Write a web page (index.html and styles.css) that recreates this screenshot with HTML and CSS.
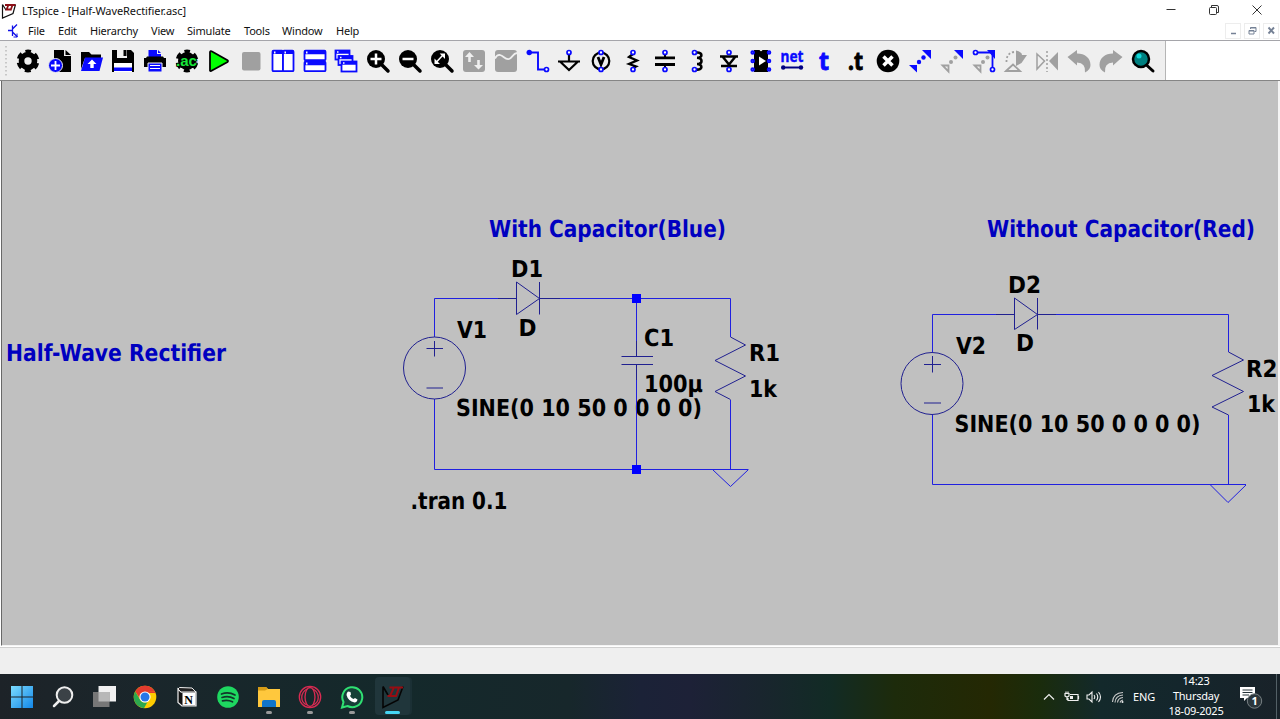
FILE: index.html
```html
<!DOCTYPE html>
<html lang="en">
<head>
<meta charset="utf-8">
<title>LTspice - [Half-WaveRectifier.asc]</title>
<link rel="stylesheet" href="styles.css">
</head>
<body>
<div class="app">
  <header class="titlebar">
    <svg class="logo" width="18" height="18" viewBox="0 0 18 18"><path d="M1.500 2.500V16L12 11.500L14.500 2.500M1.500 2.500L5 8" fill="none" stroke="#111" stroke-width="1.200"/><path d="M4 3H7.500L5.500 7.500H9.500M8 3H14.500M11.500 3L9.500 8.500" fill="none" stroke="#8c1018" stroke-width="1.800"/></svg>
    <span class="title">LTspice - [Half-WaveRectifier.asc]</span>
    <div class="winbtns">
      <svg width="12" height="12" viewBox="0 0 12 12"><path d="M1.500 5.500H10.500" stroke="#333"/></svg>
      <svg width="12" height="12" viewBox="0 0 12 12" fill="none" stroke="#333"><rect x="1.500" y="3.500" width="7" height="7" rx="1"/><path d="M3.500 3V1.500H9Q10.500 1.500 10.500 3V8.500H9"/></svg>
      <svg width="12" height="12" viewBox="0 0 12 12"><path d="M1.500 1.500L10.500 10.500M10.500 1.500L1.500 10.500" stroke="#333"/></svg>
    </div>
  </header>
  <nav class="menubar">
    <svg class="docicon" width="14" height="16" viewBox="0 0 14 16" fill="none" stroke="#1010e8" stroke-width="1.300"><path d="M1 7.500H5M5.500 2.500V13M5.500 6L10 1.500M5.500 9L10.500 14"/><path d="M10 10.500V14H6.500" stroke-width="1"/></svg>
    <span class="m1">File</span><span class="m2">Edit</span><span class="m3">Hierarchy</span><span class="m4">View</span><span class="m5">Simulate</span><span class="m6">Tools</span><span class="m7">Window</span><span class="m8">Help</span>
    <div class="mdi">
      <i><svg width="9" height="9" viewBox="0 0 9 9"><path d="M2 7.500H7" stroke="#758195" stroke-width="1.500"/></svg></i>
      <i><svg width="9" height="9" viewBox="0 0 9 9" fill="none" stroke="#758195"><path d="M2.500 3V1.500H8V5.500H6.500M2.500 2H8M1 4.500H6V8H1ZM1 5H6"/></svg></i>
      <i><svg width="9" height="9" viewBox="0 0 9 9"><path d="M1.500 1.500L7 7.500M7 1.500L1.500 7.500" stroke="#758195" stroke-width="1.900"/></svg></i>
    </div>
  </nav>
  <div class="toolrow">
    <div class="toolbar">
      <svg class="grip" width="4" height="32" viewBox="0 0 4 32"><path d="M2 1V32" stroke="#bbb" stroke-width="1.500" stroke-dasharray="1.500 2.500"/></svg>
      <!-- settings -->
      <svg viewBox="0 0 24 24"><circle cx="12" cy="12" r="6.500" fill="none" stroke="#000" stroke-width="5.600"/><circle cx="12" cy="12" r="9.600" fill="none" stroke="#000" stroke-width="3.600" stroke-dasharray="5.800 4.253" stroke-dashoffset="2.900" transform="rotate(-90 12 12)"/></svg>
      <!-- new -->
      <svg viewBox="0 0 24 24"><path d="M6 1H16V7H23V23H6Z"/><path d="M17.500 1L23 6H17.500Z"/><circle cx="7.500" cy="16.500" r="7" fill="#0a0aff" stroke="#efefef"/><path d="M7.500 12V21M3 16.500H12" stroke="#fff" stroke-width="1.800"/></svg>
      <!-- open -->
      <svg viewBox="0 0 24 24"><path d="M1 3H9L11.500 5.500H21V9H5L1 20Z"/><path d="M5 8.500H23L19.500 22H1Z" fill="#0a0aff"/><path d="M12 10.500L16.500 15H13.700V19H10.300V15H7.500Z" fill="#fff"/></svg>
      <!-- save -->
      <svg viewBox="0 0 24 24"><path d="M1 1H20L23 4V23H1Z"/><path d="M6 1H16V9H6Z" fill="#f0f0f0"/><path d="M12.500 1H15.500V7H12.500Z"/><path d="M3 14H21V23H3Z" fill="#fff"/><path d="M3 18.500H21V22H3Z" fill="#0a0aff"/></svg>
      <!-- print -->
      <svg viewBox="0 0 24 24"><path d="M5.500 1H14V5H18V9H5.500Z" fill="#0a0aff"/><path d="M15 1L18 4H15Z" fill="#0a0aff"/><path d="M1 9H3L4 7.500H20L21 9H23V18H1Z"/><path d="M5 14H19V23H5Z" fill="#0a0aff" stroke="#efefef"/><path d="M7 16.500H17M7 19.500H17" stroke="#fff" stroke-width="1.200"/></svg>
      <!-- analysis settings -->
      <svg viewBox="0 0 24 24"><circle cx="12" cy="12" r="9"/><circle cx="12" cy="12" r="9.600" fill="none" stroke="#000" stroke-width="3.600" stroke-dasharray="5.800 4.253" stroke-dashoffset="2.900" transform="rotate(-90 12 12)"/><text class="ac" x="1" y="16.500" textLength="21" lengthAdjust="spacingAndGlyphs">.ac</text></svg>
      <!-- run -->
      <svg viewBox="0 0 24 24"><path d="M3 3V21.500Q3.500 22.500 5 21.500L20.500 13Q21.500 12 20.500 11.300L5 2.500Q3.500 1.700 3 3Z" fill="#0f0" stroke="#000" stroke-width="1.800"/></svg>
      <!-- halt -->
      <svg viewBox="0 0 24 24"><rect x="3" y="3" width="18.500" height="18.500" rx="2" fill="#a0a0a0"/></svg>
      <!-- tile vertically -->
      <svg viewBox="0 0 24 24" fill="#fff" stroke="#0a0aff" stroke-width="1.800"><rect x="1.500" y="1.700" width="10.500" height="20.500" rx="1"/><rect x="12" y="1.700" width="10.500" height="20.500" rx="1"/><path d="M2 3.500H22" stroke-width="3"/><path d="M3 3.500H4.500M13.500 3.500H15" stroke="#fff"/></svg>
      <!-- tile horizontally -->
      <svg viewBox="0 0 24 24" fill="#fff" stroke="#0a0aff" stroke-width="1.800"><rect x="1.500" y="1.700" width="21" height="9.500" rx="1"/><rect x="1.500" y="12.700" width="21" height="9.500" rx="1"/><path d="M2 3.500H22M2 14.500H22" stroke-width="3.500"/><path d="M3 3.500H4.500M3 14.500H4.500" stroke="#fff"/></svg>
      <!-- cascade -->
      <svg viewBox="0 0 24 24" fill="#fff" stroke="#0a0aff" stroke-width="1.800"><rect x="1.500" y="1.500" width="14" height="9"/><path d="M2 3H15" stroke-width="3.500"/><rect x="4.500" y="7" width="14" height="9"/><path d="M5 8.500H18" stroke-width="3.500"/><rect x="7.500" y="12.500" width="15" height="10"/><path d="M8 14H22" stroke-width="3.500"/><path d="M3 3H4.500M6 8.500H7.500M9 14H10.500" stroke="#fff" stroke-width="1.300"/></svg>
      <!-- zoom in -->
      <svg viewBox="0 0 24 24"><circle cx="10" cy="10" r="9"/><path d="M15 15L22 22" stroke="#000" stroke-width="3.500" stroke-linecap="round"/><path d="M10 4.500V15.500M4.500 10H15.500" stroke="#fff" stroke-width="2.500"/></svg>
      <!-- zoom out -->
      <svg viewBox="0 0 24 24"><circle cx="10" cy="10" r="9"/><path d="M15 15L22 22" stroke="#000" stroke-width="3.500" stroke-linecap="round"/><path d="M4.500 10H15.500" stroke="#fff" stroke-width="2.500"/></svg>
      <!-- zoom fit -->
      <svg viewBox="0 0 24 24"><circle cx="10" cy="10" r="9"/><path d="M15 15L22 22" stroke="#000" stroke-width="3.500" stroke-linecap="round"/><path d="M6 13.500L13 6" stroke="#fff" stroke-width="1.500"/><path d="M9.700 4.500H15V10ZM4.500 9.500V15H10Z" fill="#fff"/></svg>
      <!-- autorange -->
      <svg viewBox="0 0 24 24"><rect x="1" y="1" width="22" height="22" rx="3" fill="#a0a0a0"/><path d="M7.500 3L12 8H8.800V13H6.200V8H3ZM16.500 20.500L12 16H15.200V11H17.800V16H21Z" fill="#efefef"/></svg>
      <!-- plot trace -->
      <svg viewBox="0 0 24 24"><rect x="1" y="1" width="22" height="22" rx="3" fill="#a0a0a0"/><path d="M1 9.500Q3 5.500 6 6C10 7 11 11 15 10C18 9 19 4.500 23 4" fill="none" stroke="#efefef" stroke-width="1.800"/></svg>
      <!-- wire -->
      <svg viewBox="0 0 24 24" fill="none" stroke="#0a0aff" stroke-width="1.900"><path d="M3 3.500H12V20.500H19"/><circle cx="3.200" cy="3.500" r="1.800" fill="#0a0aff"/><circle class="pin" cx="20.500" cy="20.500" r="2"/></svg>
      <!-- ground -->
      <svg viewBox="0 0 24 24" fill="none" stroke="#000" stroke-width="2.200"><path d="M12 5V12M1 12.500H23M3 12.500L12 21L21 12.500"/><circle class="pin" cx="12" cy="3.500" r="2"/></svg>
      <!-- voltage source -->
      <svg viewBox="0 0 24 24" fill="none" stroke="#000" stroke-width="2.200"><circle cx="12" cy="12" r="8.300"/><path d="M9 8L12 15.500L15 8" stroke-width="2.800"/><circle class="pin" cx="12" cy="3.500" r="2"/><circle class="pin" cx="12" cy="20.500" r="2"/></svg>
      <!-- resistor -->
      <svg viewBox="0 0 24 24" fill="none" stroke="#000" stroke-width="2.300"><path d="M12 5L8 8L16 11.500L8 15L15 17.500L12 19"/><circle class="pin" cx="12" cy="3.500" r="2"/><circle class="pin" cx="12" cy="20.500" r="2"/></svg>
      <!-- capacitor -->
      <svg viewBox="0 0 24 24" fill="none" stroke="#000" stroke-width="2.800"><path d="M2 8.800H22M2 15.500H22"/><path d="M12 5V8M12 16V19" stroke-width="2"/><circle class="pin" cx="12" cy="3.500" r="2"/><circle class="pin" cx="12" cy="20.500" r="2"/></svg>
      <!-- inductor -->
      <svg viewBox="0 0 24 24" fill="none" stroke="#000" stroke-width="2.600"><path d="M11 3.500C18 3 18 9 12 8.700C18 9 18 15 12 15C18 15 18 21.500 11 20.500"/><circle class="pin" cx="9.500" cy="3.500" r="2"/><circle class="pin" cx="9.500" cy="20.500" r="2"/></svg>
      <!-- diode -->
      <svg viewBox="0 0 24 24" fill="none" stroke="#000" stroke-width="2.400"><path d="M3 7.500H21M5.500 7.500L12 15.500L18.500 7.500M4 17H20"/><circle class="pin" cx="12" cy="3.500" r="2"/><circle class="pin" cx="12" cy="20.500" r="2"/></svg>
      <!-- component -->
      <svg viewBox="0 0 24 24"><path d="M5 1H10.500Q12 3.500 13.500 1H19V23H5Z"/><path d="M10 7.500L17 12L10 16.500Z" fill="#fff"/><g fill="#efefef" stroke="#0a0aff" stroke-width="2"><circle cx="3.700" cy="3.500" r="1.300"/><circle cx="3.700" cy="12" r="1.300"/><circle cx="3.700" cy="20.500" r="1.300"/><circle cx="20" cy="3.500" r="1.300"/><circle cx="20" cy="12" r="1.300"/><circle cx="20" cy="20.500" r="1.300"/></g></svg>
      <!-- net name -->
      <svg viewBox="0 0 24 24"><text class="net" x="0.500" y="13" textLength="23" lengthAdjust="spacingAndGlyphs">net</text><path d="M3 18.500H21" stroke="#000080" stroke-width="2"/><circle cx="3.200" cy="18.500" r="2.200" fill="#000080"/><circle cx="21" cy="18.500" r="2.200" fill="#000080"/></svg>
      <!-- text -->
      <svg viewBox="0 0 24 24"><text class="tee blue" x="7" y="21" textLength="10" lengthAdjust="spacingAndGlyphs">t</text></svg>
      <!-- directive -->
      <svg viewBox="0 0 24 24"><text class="tee" x="4" y="21" textLength="15" lengthAdjust="spacingAndGlyphs">.t</text></svg>
      <!-- delete -->
      <svg viewBox="0 0 24 24"><circle cx="12" cy="12" r="11.300"/><path d="M7.500 7.500L16.500 16.500M16.500 7.500L7.500 16.500" stroke="#fff" stroke-width="3.500"/></svg>
      <!-- move -->
      <svg viewBox="0 0 24 24" fill="#0a0aff"><path d="M14 1H23V10ZM1 16H9V23.500Z"/><circle cx="11" cy="13" r="2.200"/><circle cx="15.500" cy="8.500" r="2.200"/></svg>
      <!-- duplicate -->
      <svg viewBox="0 0 24 24"><path d="M14 1H23V10Z" fill="#0a0aff"/><path d="M2.500 16.500H8.500V22.500Z" fill="none" stroke="#a0a0a0" stroke-width="1.800"/><g fill="#a0a0a0"><circle cx="11" cy="13" r="2"/><circle cx="15.500" cy="8.500" r="2"/></g></svg>
      <!-- drag -->
      <svg viewBox="0 0 24 24"><path d="M2.500 16.500H8.500V22.500Z" fill="none" stroke="#a0a0a0" stroke-width="1.800"/><g fill="#a0a0a0"><circle cx="11" cy="13" r="2"/><circle cx="15.500" cy="8.500" r="2"/></g><path d="M4 3.500H20.500V19" fill="none" stroke="#0a0aff" stroke-width="1.800"/><path d="M15 1H23V10Z" fill="#0a0aff"/><circle class="pin" cx="3.500" cy="3.500" r="2"/><circle class="pin" cx="20.500" cy="20.500" r="2"/></svg>
      <!-- rotate -->
      <svg viewBox="0 0 24 24"><path d="M12 1.500Q18 3 18 6H23L17.500 14L12 17Z" fill="#a0a0a0"/><path d="M10 3Q2 4 2.500 14" fill="none" stroke="#a0a0a0" stroke-width="1.800" stroke-dasharray="2 2"/><path d="M2 22L9 15.500L16 22Z" fill="#efefef" stroke="#a0a0a0" stroke-width="1.800"/></svg>
      <!-- mirror -->
      <svg viewBox="0 0 24 24"><path d="M2 5L9.500 12L2 20Z" fill="none" stroke="#a0a0a0" stroke-width="1.500"/><path d="M23 3V21.500L14 12Z" fill="#a0a0a0"/><path d="M12 2V23" stroke="#a0a0a0" stroke-width="1.500" stroke-dasharray="2 2"/></svg>
      <!-- undo -->
      <svg viewBox="0 0 24 24"><path d="M0.500 8L10 1V4.500C18 4.500 23.500 9 23.500 16Q23.500 21 18 23.500Q19 14 10 13.500V16.500Z" fill="#a0a0a0"/></svg>
      <!-- redo -->
      <svg viewBox="0 0 24 24"><path d="M23.500 8L14 1V4.500C6 4.500 0.500 9 0.500 16Q0.500 21 6 23.500Q5 14 14 13.500V16.500Z" fill="#a0a0a0"/></svg>
      <!-- search -->
      <svg viewBox="0 0 24 24"><circle cx="10" cy="10" r="8" fill="#008080" stroke="#000" stroke-width="2.500"/><path d="M16 16.500L22 22" stroke="#000" stroke-width="3" stroke-linecap="round"/><circle cx="8" cy="7" r="2.500" fill="#10d8d8"/></svg>
    </div>
  </div>
  <main class="canvas">
    <svg class="schematic" width="1276" height="564" viewBox="2 81 1276 564">
      <g class="wire">
        <path d="M434.500 337V298.500H498M560 298.500H730.500V337M434.500 399V469.500H748.500M636.500 298V341M730.500 400V469.500"/>
        <path d="M713 470L730.500 486.500L748 470"/>
        <path d="M932.500 352V314.500H996M1056 314.500H1228.500V352M932.500 415V484.500H1246M1228.500 415V484.500"/>
        <path d="M1210.500 485L1228 502.500L1246 485"/>
      </g>
      <g class="part">
        <path d="M498 298.500H516.500M539.500 298.500H560M516.500 282V314.500L539.500 298.500ZM539.500 282V314.500"/>
        <circle cx="434.500" cy="368" r="31"/>
        <path d="M426.500 348.500H443M434.500 341V356.500M426.500 388H443"/>
        <path d="M621.500 356.500H653M621.500 364.500H653M636.500 341V356M636.500 365V380"/>
        <path d="M730.500 337L745.500 345L715 360.500L745.500 376L715 391.500L730.500 399.500"/>
        <path d="M996 314.500H1014.500M1037.500 314.500H1056M1014.500 298V329.500L1037.500 314.500ZM1037.500 298V329.500"/>
        <circle cx="932" cy="383.500" r="31"/>
        <path d="M924 364.500H941M932.500 356V372.500M924 403H941"/>
        <path d="M1228.500 352L1243.500 360L1212 375.500L1243.500 391.500L1212 407L1228.500 415"/>
      </g>
      <g class="note">
        <text x="6" y="361" textLength="220" lengthAdjust="spacingAndGlyphs">Half-Wave Rectifier</text>
        <text x="489" y="237" textLength="237" lengthAdjust="spacingAndGlyphs">With Capacitor(Blue)</text>
        <text x="987" y="237" textLength="268" lengthAdjust="spacingAndGlyphs">Without Capacitor(Red)</text>
      </g>
      <g class="label">
        <text x="511" y="277" textLength="32" lengthAdjust="spacingAndGlyphs">D1</text>
        <text x="457" y="338" textLength="30" lengthAdjust="spacingAndGlyphs">V1</text>
        <text x="518.500" y="336" textLength="18" lengthAdjust="spacingAndGlyphs">D</text>
        <text x="644" y="346" textLength="30" lengthAdjust="spacingAndGlyphs">C1</text>
        <text x="644" y="392" textLength="59" lengthAdjust="spacingAndGlyphs">100µ</text>
        <text x="749" y="361" textLength="31" lengthAdjust="spacingAndGlyphs">R1</text>
        <text x="749" y="397" textLength="28" lengthAdjust="spacingAndGlyphs">1k</text>
        <text x="456" y="415.500" textLength="246" lengthAdjust="spacingAndGlyphs">SINE(0 10 50 0 0 0 0)</text>
        <text x="410.500" y="509" textLength="97" lengthAdjust="spacingAndGlyphs">.tran 0.1</text>
        <text x="1008" y="293" textLength="33" lengthAdjust="spacingAndGlyphs">D2</text>
        <text x="1016" y="351" textLength="18" lengthAdjust="spacingAndGlyphs">D</text>
        <text x="956" y="353.500" textLength="30" lengthAdjust="spacingAndGlyphs">V2</text>
        <text x="954.500" y="431.500" textLength="246" lengthAdjust="spacingAndGlyphs">SINE(0 10 50 0 0 0 0)</text>
        <text x="1246" y="377" textLength="31.500" lengthAdjust="spacingAndGlyphs">R2</text>
        <text x="1247" y="412" textLength="28" lengthAdjust="spacingAndGlyphs">1k</text>
      </g>
      <path class="wire" d="M636.500 380V469"/>
      <path d="M632 294H641V303H632ZM632 465H641V474H632Z" fill="#0000ff"/>
    </svg>
  </main>
  <div class="status"></div>
  <footer class="taskbar">
    <div class="apps">
      <div class="task"><svg viewBox="0 0 24 24"><defs><linearGradient id="win" x1="0" y1="0" x2="1" y2="1"><stop offset="0" stop-color="#7bdcff"/><stop offset="1" stop-color="#1387e8"/></linearGradient></defs><path d="M1 1H11.500V11.500H1ZM12.500 1H23V11.500H12.500ZM1 12.500H11.500V23H1ZM12.500 12.500H23V23H12.500Z" fill="url(#win)"/></svg></div>
      <div class="task"><svg viewBox="0 0 24 24"><circle cx="13.500" cy="10" r="7.800" fill="#3b4247" stroke="#eee" stroke-width="2"/><path d="M8 16L3 21" stroke="#eee" stroke-width="2.500" stroke-linecap="round"/></svg></div>
      <div class="task"><svg viewBox="0 0 24 24"><path d="M6.500 1H24V16.500H6.500Z" fill="#f1f1f1"/><path d="M1 7H17.500V22H1Z" fill="#777"/><path d="M6.500 7H17.500V16.500H6.500Z" fill="#b8b8b8"/></svg></div>
      <div class="task"><svg viewBox="0 0 24 24"><circle cx="12" cy="12" r="11.300" fill="#fc0"/><path d="M2.200 6.500A11.300 11.300 0 0 1 21.800 6.500L12 7L8 15Z" fill="#e33b2e"/><path d="M2.200 6.500L7.300 15A5.500 5.500 0 0 0 14.500 17L11 23.200A11.300 11.300 0 0 1 2.200 6.500Z" fill="#2da94f"/><path d="M12 6.500H21.800L22.500 8H12Z" fill="#e33b2e"/><circle cx="12" cy="12" r="5.600" fill="#fff"/><circle cx="12" cy="12" r="4.500" fill="#2877e8"/></svg></div>
      <div class="task"><svg viewBox="0 0 24 24"><path d="M3 4L6 7H21V21H7L3 17.500Z" fill="#111" stroke="#eee" stroke-width="1.200"/><path d="M3 4L4.500 2.500L17 3L21 7H6Z" fill="#222" stroke="#eee"/><path d="M7.500 8H20.500V20.500H7.500Z" fill="#fff"/><text class="notion" x="9.300" y="18.500">N</text></svg></div>
      <div class="task"><svg viewBox="0 0 24 24"><circle cx="12" cy="12" r="10.800" fill="#1ed760"/><path d="M5.500 9Q12.500 6.500 19 10M6 12.500Q12.500 10.500 18 13.500M6.500 15.800Q12 14.500 16.500 16.800" fill="none" stroke="#12352a" stroke-width="1.700" stroke-linecap="round"/></svg></div>
      <div class="task open"><svg viewBox="0 0 24 24"><path d="M1 2H9L11 4H23V22H1Z" fill="#ffc83d"/><path d="M1 2H9L11 4L8 5.500H1Z" fill="#d69b16"/><path d="M5 22V17Q5 15 7 15H17Q19 15 19 17V22Z" fill="#1175c9"/></svg></div>
      <div class="task open"><svg viewBox="0 0 24 24" fill="none" stroke="#d92b52" stroke-width="1.300"><circle cx="12" cy="12" r="10.700"/><ellipse cx="12" cy="12" rx="5" ry="9.500"/><path d="M9 4C2 8 2 17 9 20M15 4C22 8 22 17 15 20"/></svg></div>
      <div class="task open"><svg viewBox="0 0 24 24"><path d="M2 22.500L3.500 17A10 10 0 1 1 7.500 21Z" fill="#163f37" stroke="#2fe072" stroke-width="2"/><path d="M8 6.500L10.500 7L11 9.500L10 11Q11.500 13.500 13.500 14L15 13L17.500 14.500Q17 17.500 14.500 17.500Q8 16 6.500 10Q6.500 7.500 8 6.500Z" fill="#fff"/></svg></div>
      <div class="task open active"><svg viewBox="0 0 24 24"><path d="M2 1.500V22.500L17 15L22 1.500M2 1.500L7 10" fill="none" stroke="#050505" stroke-width="1.600"/><path d="M8.500 2.500H13L9 11H6.500M9 11H15L18 2.500M14 2.500H22" fill="none" stroke="#980c12" stroke-width="2"/></svg></div>
    </div>
    <div class="tray">
      <svg class="chev" width="12" height="12" viewBox="0 0 12 12"><path d="M1 8.500L6 3.500L11 8.500" fill="none" stroke="#eee" stroke-width="1.200"/></svg>
      <svg class="batt" width="16" height="12" viewBox="0 0 16 12" fill="none" stroke="#eee" stroke-width="1.200"><path d="M6 3.500H14V9.500H4V7M14.500 5V8M1 2.500H5V5Q3 6.500 1 5ZM2 2.500V0.500M4 2.500V0.500M3 6V9"/><path d="M6 5H9V8H6Z" fill="#eee" stroke="none"/></svg>
      <svg class="vol" width="16" height="14" viewBox="0 0 16 14" fill="none" stroke="#eee" stroke-width="1.100"><path d="M1 5H3L6 2V12L3 9H1ZM8 5Q9.500 7 8 9M10.500 3.500Q13 7 10.500 10.500M12.500 2Q16.500 7 12.500 12"/></svg>
      <svg class="wifi" width="14" height="14" viewBox="0 0 14 14" fill="none" stroke="#ccc" stroke-width="1.100"><path d="M1.500 12Q2 3 12 2.500M4 12.500Q4.500 5.500 12 5M6.500 12.500Q7 8 12 7.500M9 12.500Q9.500 10.500 12 10"/><circle cx="11.500" cy="12" r="1" fill="#eee" stroke="none"/></svg>
      <span class="lang">ENG</span>
      <div class="clock"><span>14:23</span><span class="day">Thursday</span><span class="date">18-09-2025</span></div>
      <svg class="notif" width="24" height="26" viewBox="0 0 24 26"><path d="M1 3H16V14H8L5 17V14H1Z" fill="#fff"/><path d="M3.500 6H13.500M3.500 8.500H13.500M3.500 11H10" stroke="#26343a" stroke-width="1"/><circle cx="15.500" cy="17" r="7.200" fill="#2b363b" stroke="#777f83"/><text x="12.500" y="21">1</text></svg>
      <i class="peek"></i>
    </div>
  </footer>
</div>
</body>
</html>
```

FILE: styles.css
```css
* { box-sizing: border-box; }
body { margin: 0; background: #fff; font-family: "Noto Sans", "Open Sans", sans-serif; overflow: hidden; }
svg { display: block; flex: none; }
.app { width: 1280px; height: 719px; display: flex; flex-direction: column; }
.titlebar { height: 21px; display: flex; align-items: center; padding-left: 1px; font-size: 11px; color: #111; }
.title { margin-left: 3px; font-size: 11px; letter-spacing: -0.080px; line-height: 20px; white-space: nowrap; padding-top: 1px; }
.winbtns { margin-left: auto; display: flex; gap: 31px; padding-right: 17px; padding-bottom: 2px; }
.menubar { height: 20px; display: flex; align-items: center; padding-left: 7px; font-size: 11px; letter-spacing: -0.200px; color: #111; border-bottom: 1px solid #a5a5aa; }
.menubar span { white-space: nowrap; line-height: 18px; }
.docicon { margin-right: 7px; }
.m1 { width: 30px; } .m2 { width: 32px; } .m3 { width: 61px; } .m4 { width: 36px; }
.m5 { width: 57px; } .m6 { width: 38px; } .m7 { width: 54px; } .m8 { width: 30px; }
.mdi { margin-left: auto; display: flex; gap: 3px; padding-right: 1px; }
.mdi i { width: 16px; height: 16px; border: 1px solid #ededed; display: flex; align-items: center; justify-content: center; }
.toolrow { height: 40px; display: flex; border-bottom: 1px solid #858585; background: #fff; }
.toolbar { width: 1166px; display: flex; align-items: center; gap: 7.860px; background: #efefef; border-right: 1px solid #b5b5b5; padding-top: 1px; padding-left: 4px; }
.toolbar > svg { overflow: visible; }
.toolbar > svg:not(.grip) { width: 24px; height: 24px; }
.pin { fill: #fff; stroke: #0a0aff; stroke-width: 1.700px; }
.ac { font: bold 14px "Liberation Sans", sans-serif; fill: #16e63a; stroke: #000; stroke-width: 1.500px; paint-order: stroke; }
.net { font: bold 16px "Noto Sans", sans-serif; fill: #0a0aff; stroke: #0a0aff; stroke-width: 0.400px; }
.tee { font: bold 25px "Noto Sans", sans-serif; fill: #000; stroke: #000; stroke-width: 0.900px; }
.tee.blue { fill: #0a0aff; stroke: #0a0aff; }
.canvas { height: 565px; background: #c0c0c0; border-left: 1px solid #686868; border-right: 2px solid #f4f4f4; border-bottom: 1px solid #f4f4f4; margin-left: 1px; overflow: hidden; }
.wire { fill: none; stroke: #2020e0; stroke-width: 1px; }
.part { fill: none; stroke: #202090; stroke-width: 1px; }
.note, .label { font: bold 23.500px "DejaVu Sans Condensed", "DejaVu Sans", sans-serif; text-rendering: geometricPrecision; }
.note { fill: #0000c0; }
.label { fill: #000; }
.status { height: 28px; background: #efefef; border-top: 1px solid #fff; box-shadow: inset 0 1px #d0d0d0; }
.taskbar { height: 45px; display: flex; color: #fff; background: linear-gradient(90deg, #1d2328 0, #1a262b 150px, #14292b 400px, #17272b 570px, #1b2237 640px, #1d2137 690px, #19252e 760px, #122b25 830px, #1d2b0b 895px, #242803 990px, #1a2c0c 1040px, #13292b 1100px, #14262c 1180px, #192229 1280px); }
.apps { display: flex; padding-left: 1px; }
.task { width: 41.250px; height: 45px; display: flex; flex-direction: column; align-items: center; padding-top: 11px; }
.task > svg { width: 24px; height: 24px; }
.open::after { content: ""; width: 6px; height: 3px; border-radius: 2px; background: #999; margin-top: 2px; }
.active { width: 35px; margin-left: 3px; height: 38px; margin-top: 3px; padding-top: 8px; border-radius: 4px; background: #20363b; box-shadow: 2px 0 #1b3035; }
.active::after { width: 15px; background: #45d6f4; }
.notion { font: bold 12px "Liberation Serif", serif; fill: #000; }
.tray { margin-left: auto; display: flex; align-items: center; }
.chev { margin-right: 9px; }
.batt { margin-right: 6px; }
.vol { margin-right: 9px; }
.wifi { margin-right: 8px; }
.lang { width: 33px; font-size: 11px; letter-spacing: -0.100px; }
.clock { width: 60px; display: flex; flex-direction: column; align-items: center; font-size: 11px; line-height: 15px; letter-spacing: -0.250px; white-space: nowrap; padding-bottom: 2px; }
.notif { margin-left: 13px; margin-right: 13px; }
.notif text { font: bold 11px "Noto Sans", sans-serif; fill: #fff; }
.peek { width: 4px; height: 45px; border-left: 1px solid #536066; }
```
